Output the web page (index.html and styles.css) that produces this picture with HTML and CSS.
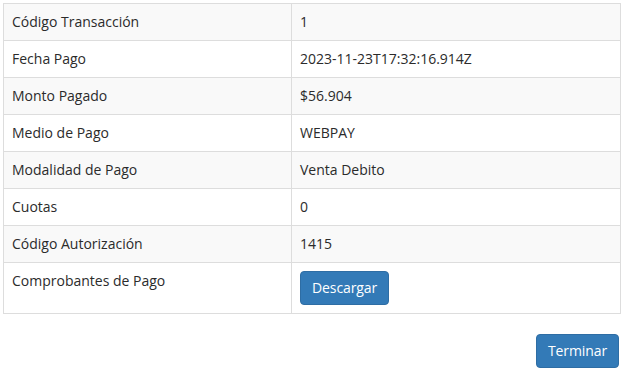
FILE: index.html
```html
<!DOCTYPE html>
<html lang="es">
<head>
<meta charset="utf-8">
<link rel="stylesheet" href="styles.css">
</head>
<body>
<div class="page">
  <table class="detail">
    <tbody>
      <tr><th>Código Transacción</th><td>1</td></tr>
      <tr><th>Fecha Pago</th><td>2023-11-23T17:32:16.914Z</td></tr>
      <tr><th>Monto Pagado</th><td>$56.904</td></tr>
      <tr><th>Medio de Pago</th><td>WEBPAY</td></tr>
      <tr><th>Modalidad de Pago</th><td>Venta Debito</td></tr>
      <tr><th>Cuotas</th><td>0</td></tr>
      <tr><th>Código Autorización</th><td>1415</td></tr>
      <tr><th>Comprobantes de Pago</th><td><button class="btn">Descargar</button></td></tr>
    </tbody>
  </table>
  <div class="actions">
    <button class="btn">Terminar</button>
  </div>
</div>
</body>
</html>
```
FILE: styles.css
```css
html, body {
  margin: 0;
  padding: 0;
  background: #fff;
}
body {
  font-family: "Open Sans", "Noto Sans", sans-serif;
  font-size: 14px;
  line-height: 20px;
  color: #2b2b2b;
}
.page {
  padding: 3px 12px 0 3px;
}
.detail {
  width: 100%;
  border-collapse: collapse;
  border: 1px solid #ddd;
}
.detail th,
.detail td {
  border: 1px solid #ddd;
  padding: 8px;
  text-align: left;
  font-weight: 400;
  vertical-align: top;
}
.detail th {
  width: 271px;
}
.detail tr:nth-child(odd) {
  background: #f9f9f9;
}
.btn {
  display: inline-block;
  font-family: inherit;
  font-size: 14px;
  line-height: 20px;
  padding: 6px 11px;
  letter-spacing: -0.1px;
  color: #fff;
  background: #337ab7;
  border: 1px solid #2e6da4;
  border-radius: 4px;
  cursor: pointer;
}
.actions {
  display: flex;
  justify-content: flex-end;
  margin-top: 20px;
  padding-right: 2px;
}
```
